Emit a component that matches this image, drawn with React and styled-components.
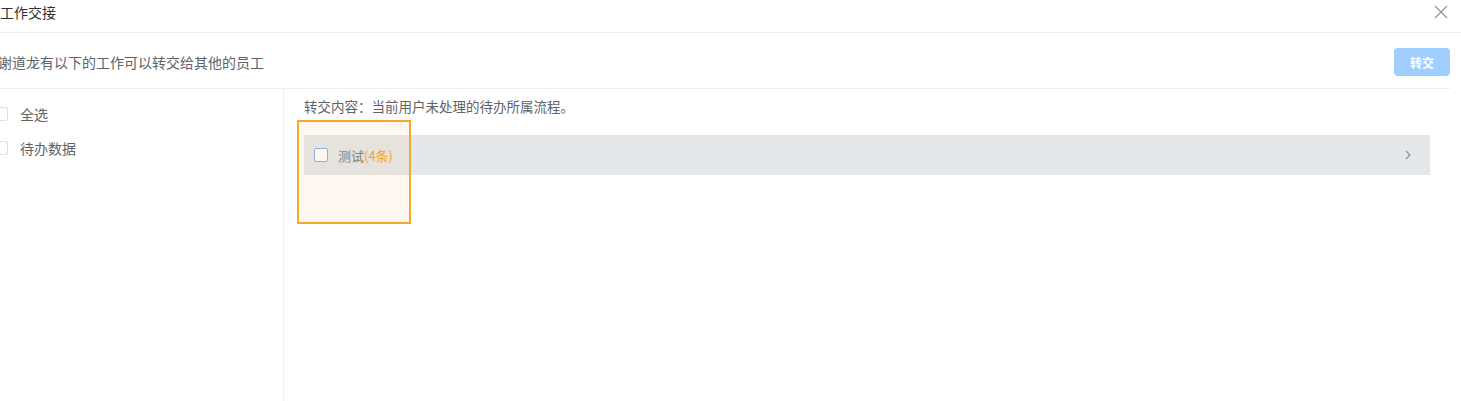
import React from 'react';
import styled, { createGlobalStyle } from 'styled-components';

const GlobalStyle = createGlobalStyle`
  html, body {
    margin: 0;
    padding: 0;
    background: #fff;
    font-family: "Noto Sans CJK SC", "Liberation Sans", sans-serif;
    overflow: hidden;
  }
`;

const Dialog = styled.div`
  width: 1461px;
  height: 401px;
  display: flex;
  flex-direction: column;
`;

const Header = styled.div`
  height: 33px;
  display: flex;
  align-items: center;
  justify-content: space-between;
  border-bottom: 1px solid #ebeef5;
  padding-bottom: 8px;
  box-sizing: border-box;
`;

const Title = styled.div`
  font-size: 14px;
  color: #303133;
  line-height: 18px;
`;

const CloseButton = styled.button`
  border: none;
  background: none;
  padding: 0;
  margin-right: 13px;
  width: 14px;
  height: 14px;
  display: flex;
  cursor: pointer;
`;

const Toolbar = styled.div`
  height: 56px;
  margin-right: 11px;
  display: flex;
  align-items: center;
  justify-content: space-between;
  border-bottom: 1px solid #ebeef5;
  box-sizing: border-box;
  padding-top: 3px;
`;

const Notice = styled.div`
  margin-left: -2px;
  font-size: 14px;
  color: #606266;
`;

const TransferButton = styled.button`
  width: 56px;
  height: 28px;
  border: none;
  border-radius: 4px;
  background: #a0cfff;
  color: #fff;
  font-family: inherit;
  font-size: 12px;
  font-weight: bold;
  cursor: not-allowed;
`;

const Body = styled.div`
  flex: 1;
  display: flex;
  margin-right: 11px;
`;

const Sidebar = styled.div`
  width: 284px;
  border-right: 1px solid #ebeef5;
  box-sizing: border-box;
  padding-top: 17px;
  display: flex;
  flex-direction: column;
  gap: 18px;
`;

const SideItem = styled.label`
  display: flex;
  align-items: center;
  gap: 12px;
  height: 16px;
  margin-left: -6px;
  font-size: 14px;
  color: #606266;
`;

const Box = styled.span`
  width: 14px;
  height: 14px;
  box-sizing: border-box;
  border: 1px solid ${p => (p.$active ? '#7cb4f5' : '#dcdfe6')};
  border-radius: 2px;
  background: #fff;
  flex-shrink: 0;
`;

const Content = styled.div`
  flex: 1;
  position: relative;
  padding: 8px 20px 0 20px;
`;

const Desc = styled.div`
  font-size: 13.5px;
  color: #606266;
  line-height: 18px;
`;

const FlowRow = styled.div`
  margin-top: 20px;
  height: 40px;
  background: #e5e8eb;
  display: flex;
  align-items: center;
  padding: 0 18px 0 10px;
  gap: 10px;
`;

const FlowName = styled.span`
  font-size: 13px;
  color: #7a7c80;
  flex: 1;
`;

const Count = styled.span`
  color: #f5a623;
`;

const Highlight = styled.div`
  position: absolute;
  left: 13px;
  top: 31px;
  width: 114px;
  height: 104px;
  box-sizing: border-box;
  border: 2px solid #f7a82a;
  background: rgba(255, 160, 40, 0.07);
  pointer-events: none;
`;

const Chevron = () => (
  <svg width="8" height="10" viewBox="0 0 8 10">
    <path d="M2 1 L6 5 L2 9" fill="none" stroke="#8a8d92" strokeWidth="1.1" />
  </svg>
);

const App = () => (
  <Dialog>
    <GlobalStyle />
    <Header>
      <Title>工作交接</Title>
      <CloseButton>
        <svg width="14" height="14" viewBox="0 0 14 14">
          <path d="M1 1 L13 13 M13 1 L1 13" stroke="#909399" strokeWidth="1.2" />
        </svg>
      </CloseButton>
    </Header>
    <Toolbar>
      <Notice>谢道龙有以下的工作可以转交给其他的员工</Notice>
      <TransferButton>转交</TransferButton>
    </Toolbar>
    <Body>
      <Sidebar>
        <SideItem><Box />全选</SideItem>
        <SideItem><Box />待办数据</SideItem>
      </Sidebar>
      <Content>
        <Desc>转交内容：当前用户未处理的待办所属流程。</Desc>
        <FlowRow>
          <Box $active />
          <FlowName>测试<Count>(4条)</Count></FlowName>
          <Chevron />
        </FlowRow>
        <Highlight />
      </Content>
    </Body>
  </Dialog>
);

export default App;
